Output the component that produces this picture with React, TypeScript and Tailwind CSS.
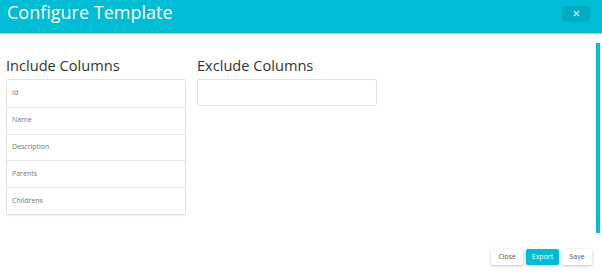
import React from "react";

const included = ["Id", "Name", "Description", "Parents", "Childrens"];

export default function App() {
  return (
    <div
      className="relative w-[602px] h-[279px] overflow-hidden bg-white"
      style={{ fontFamily: '"Open Sans", sans-serif' }}
    >
      {/* header */}
      <div className="flex h-[34px] items-center justify-between bg-[#00bcd4] pl-[7px] pr-[12px] border-b border-[#7fdbe8]">
        <h1 className="text-[18px] leading-none text-white -mt-[9px]">
          Configure Template
        </h1>
        <button className="-mt-[6px] flex h-[16px] w-[28px] items-center justify-center rounded-[2px] bg-[#00acc3]">
          <svg width="7" height="7" viewBox="0 0 8 8">
            <path d="M1 1L7 7M7 1L1 7" stroke="#d8f3f7" strokeWidth="1.5" />
          </svg>
        </button>
      </div>

      {/* body */}
      <div className="flex gap-[11px] pl-[6px] pt-[22px]">
        <div className="w-[180px]">
          <h2 className="mb-[4px] text-[14.6px] leading-[19px] text-[#333]">
            Include Columns
          </h2>
          <div className="border border-[#e2e2e2] rounded-[2px] shadow-[0_1px_1px_rgba(0,0,0,0.04)]">
            {included.map((c, i) => (
              <div
                key={c}
                className={`flex h-[26.8px] items-center pl-[5px] text-[7px] text-[#777] ${
                  i > 0 ? "border-t border-[#e6e6e6]" : ""
                }`}
              >
                {c}
              </div>
            ))}
          </div>
        </div>
        <div className="w-[180px]">
          <h2 className="mb-[4px] text-[14.6px] leading-[19px] text-[#333]">
            Exclude Columns
          </h2>
          <div className="h-[27px] border border-[#e2e2e2] rounded-[2px]" />
        </div>
      </div>

      {/* footer buttons */}
      <div className="absolute left-[491px] top-[249px] flex gap-[3px] text-[7px]">
        <button className="h-[16px] w-[32px] rounded-[2px] bg-white text-[#555] shadow-[0_1px_3px_rgba(0,0,0,0.25)]">
          Close
        </button>
        <button className="h-[16px] w-[33px] rounded-[2px] bg-[#00bcd4] text-white shadow-[0_1px_3px_rgba(0,0,0,0.2)]">
          Export
        </button>
        <button className="h-[16px] w-[30px] rounded-[2px] bg-white text-[#555] shadow-[0_1px_3px_rgba(0,0,0,0.25)]">
          Save
        </button>
      </div>

      {/* scrollbar thumb */}
      <div className="absolute left-[596px] top-[43px] h-[190px] w-[4px] bg-[#00bcd4]" />
    </div>
  );
}
